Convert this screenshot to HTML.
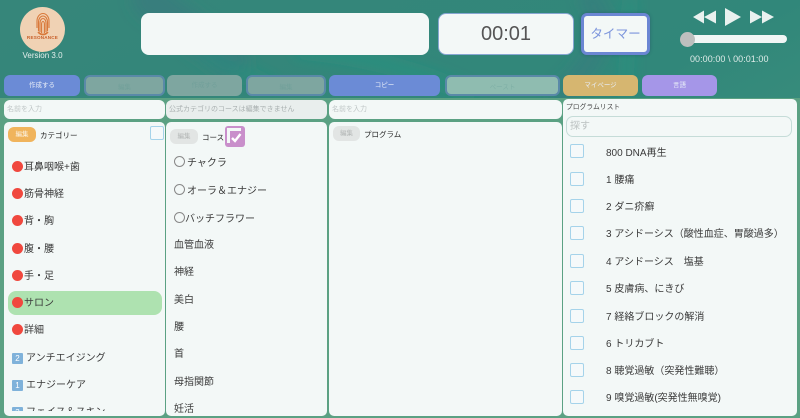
<!DOCTYPE html>
<html><head><meta charset="utf-8">
<style>
html,body{margin:0;padding:0}
body{width:800px;height:418px;overflow:hidden;position:relative;font-family:"Liberation Sans","Noto Sans CJK JP",sans-serif;background:#3a8a78}
#w{position:absolute;left:0;top:0;width:800px;height:418px;overflow:hidden;filter:blur(.35px)}
.a{position:absolute;box-sizing:border-box}
.p{background:#f3f8f7;border-radius:5px}
.btn{top:75px;height:21px;border-radius:6px;color:#e8eef8;font-size:6.5px;line-height:21px;text-align:center}
.off{background:#7ea6a0;border:2px solid #5a89a8;color:#72a09a}
.t{position:absolute;white-space:nowrap;color:#3a3a3a;font-size:10px;line-height:14px}
.chk{position:absolute;width:14px;height:14px;background:#f5f9fa;border:1px solid #a5d3ea;border-radius:2px;box-sizing:border-box}
.dot{display:inline-block;width:11px;height:11px;border-radius:50%;background:#f0483e;vertical-align:-2px;margin-right:1px}
.num{display:inline-block;width:11px;height:11px;background:#7fb2da;color:#fff;font-size:8px;line-height:11px;text-align:center;border-radius:1px;margin-right:3px;vertical-align:0}
.ph{color:#bfc6c6;font-size:7px;line-height:19px;padding-left:3px}
.circ{display:inline-block;width:9px;height:9px;border:1px solid #888;border-radius:50%;vertical-align:-1px;margin-right:2px}
</style></head><body>
<div id="w">
<svg class="a" style="left:0;top:0" width="800" height="418" viewBox="0 0 800 418">
<defs>
<linearGradient id="g" x1="0" y1="0" x2="1" y2="1"><stop offset="0" stop-color="#36867a"/><stop offset=".5" stop-color="#31877a"/><stop offset="1" stop-color="#4a9a80"/></linearGradient>
<filter id="b"><feGaussianBlur stdDeviation="7"/></filter>
</defs>
<rect width="800" height="418" fill="url(#g)"/>
<g filter="url(#b)" fill="none" stroke-linecap="round">
<path d="M150 0 L230 60" stroke="#3b7480" stroke-width="36" opacity=".45"/>
<path d="M205 55 L270 85" stroke="#1f937f" stroke-width="10" opacity=".6"/>
<path d="M300 50 Q400 60 470 95" stroke="#1c9a84" stroke-width="10" opacity=".6"/>
<path d="M590 0 Q620 40 560 95" stroke="#3d7285" stroke-width="20" opacity=".35"/>
<path d="M630 0 L625 95" stroke="#1c9a84" stroke-width="8" opacity=".6"/>
</g>
<rect x="0" y="98" width="800" height="320" fill="#5ba183"/>
</svg>

<div class="a" style="left:20px;top:7px;width:45px;height:45px;border-radius:50%;background:#f0d2b4"></div>
<svg class="a" style="left:33px;top:12px" width="20" height="24" viewBox="0 0 20 24" fill="none" stroke="#d9793a" stroke-width="1.1">
<path d="M4 16 V9 a6 7.5 0 0 1 12 0 V16"/><path d="M5.5 19 V10 a4.5 6 0 0 1 9 0 V19"/><path d="M7 20 V11 a3 4.5 0 0 1 6 0 V20"/><path d="M8.6 21 V12 a1.4 2.5 0 0 1 2.8 0 V21"/><path d="M5 20 Q10 25 15 20" stroke-width="1.6"/></svg>
<div class="t" style="left:20px;top:35px;width:45px;text-align:center;font-size:4.6px;line-height:6px;color:#c8602a;letter-spacing:.2px;font-weight:bold">RESONANCE</div>
<div class="t" style="left:0;top:49px;width:85px;text-align:center;color:#e4efec;font-size:8px">Version 3.0</div>

<div class="a" style="left:141px;top:13px;width:288px;height:42px;background:#f3f8f7;border-radius:8px"></div>
<div class="a" style="left:438px;top:13px;width:136px;height:42px;background:#f3f8f7;border-radius:8px;border:1px solid #87a6d2;color:#555;font-size:20px;line-height:41px;text-align:center">00:01</div>
<div class="a" style="left:581px;top:13px;width:69px;height:42px;background:#f3f8f7;border-radius:6px;border:3px solid #6b86d3;color:#7c95dc;font-size:12.6px;line-height:36px;text-align:center;box-shadow:0 0 3px rgba(30,50,90,.35)">タイマー</div>

<svg class="a" style="left:690px;top:7px" width="90" height="20" viewBox="0 0 90 20" fill="#e9f1ef">
<path d="M3 10 L14 3.5 V16.5Z M14 10 L26 3.5 V16.5 Z"/>
<path d="M35 1 L51 10 L35 19Z"/>
<path d="M60 3.5 L72 10 L60 16.5Z M72 3.5 L84 10 L72 16.5Z"/></svg>
<div class="a" style="left:681px;top:35px;width:106px;height:8px;background:#f1f6f5;border-radius:4px"></div>
<div class="a" style="left:680px;top:32px;width:15px;height:15px;background:#bdbfbe;border-radius:50%"></div>
<div class="t" style="left:690px;top:52px;color:#dfece9;font-size:9px;letter-spacing:.05px">00:00:00 \ 00:01:00</div>

<div class="a btn" style="left:4px;width:76px;background:#6b8bd6">作成する</div>
<div class="a btn off" style="left:84px;width:81px">編集</div>
<div class="a btn" style="left:167px;width:75px;background:#7ea6a0;color:#72a09a">作成する</div>
<div class="a btn off" style="left:246px;width:80px">編集</div>
<div class="a btn" style="left:329px;width:111px;background:#6b8bd6">コピー</div>
<div class="a btn off" style="left:445px;width:115px;background:#8fbcb0;color:#7fb0a6">ペースト</div>
<div class="a btn" style="left:563px;width:75px;background:#d6b670">マイページ</div>
<div class="a btn" style="left:642px;width:75px;background:#a596e8">言語</div>

<div class="a p ph" style="left:4px;top:100px;width:161px;height:19px;border-radius:6px">名前を入力</div>
<div class="a p ph" style="left:166px;top:100px;width:161px;height:19px;border-radius:6px;background:#e9eeed;color:#a9b0b0">公式カテゴリのコースは編集できません</div>
<div class="a p ph" style="left:329px;top:100px;width:233px;height:19px;border-radius:6px">名前を入力</div>

<div class="a p" style="left:4px;top:122px;width:161px;height:294px"></div>
<div class="a p" style="left:166px;top:122px;width:161px;height:294px"></div>
<div class="a p" style="left:329px;top:122px;width:233px;height:294px"></div>
<div class="a p" style="left:563px;top:99px;width:234px;height:317px"></div>

<div class="a" style="left:8px;top:127px;width:28px;height:15px;background:#f0b45c;border-radius:6px;color:#fbf3e4;font-size:6.5px;line-height:15px;text-align:center">編集</div>
<div class="t" style="left:40px;top:130px;font-size:7.5px;line-height:11px;color:#222">カテゴリー</div>
<div class="chk" style="left:150px;top:126px"></div>
<div class="a" style="left:170px;top:129px;width:28px;height:15px;background:#e2e5e4;border-radius:6px;color:#b3b7b6;font-size:6.5px;line-height:15px;text-align:center">編集</div>
<div class="t" style="left:202px;top:132px;font-size:7.5px;line-height:11px;color:#222">コース</div>
<svg class="a" style="left:225px;top:126px" width="20" height="21" viewBox="0 0 20 21">
<rect x="0" y="0" width="20" height="21" rx="3" fill="#c98fcb"/><rect x="2" y="2" width="14" height="15" fill="#f3f8f7"/><rect x="5" y="5" width="13" height="14" fill="#c98fcb"/><path d="M7 12 L10 15 L15.5 8" stroke="#fff" stroke-width="2.4" fill="none"/></svg>
<div class="a" style="left:333px;top:126px;width:27px;height:15px;background:#e2e5e4;border-radius:6px;color:#b3b7b6;font-size:6.5px;line-height:15px;text-align:center">編集</div>
<div class="t" style="left:364px;top:129px;font-size:7.5px;line-height:11px;color:#222">プログラム</div>

<div class="a" style="left:8px;top:291px;width:154px;height:24px;background:#aee2b0;border-radius:8px"></div>
<div class="a" style="left:4px;top:122px;width:161px;height:289px;overflow:hidden">
<div class="t" style="left:8px;top:39px"><span class="dot"></span>耳鼻咽喉+歯</div>
<div class="t" style="left:8px;top:66px"><span class="dot"></span>筋骨神経</div>
<div class="t" style="left:8px;top:93px"><span class="dot"></span>背・胸</div>
<div class="t" style="left:8px;top:121px"><span class="dot"></span>腹・腰</div>
<div class="t" style="left:8px;top:148px"><span class="dot"></span>手・足</div>
<div class="t" style="left:8px;top:175px"><span class="dot"></span>サロン</div>
<div class="t" style="left:8px;top:202px"><span class="dot"></span>詳細</div>
<div class="t" style="left:8px;top:230px"><span class="num">2</span>アンチエイジング</div>
<div class="t" style="left:8px;top:257px"><span class="num">1</span>エナジーケア</div>
<div class="t" style="left:8px;top:284px"><span class="num">3</span>フェイス＆スキン</div>
</div>

<div class="t" style="left:174px;top:156px"><span class="circ"></span>チャクラ</div>
<div class="t" style="left:174px;top:184px"><span class="circ"></span>オーラ＆エナジー</div>
<div class="t" style="left:174px;top:212px"><span class="circ" style="margin-right:0"></span>バッチフラワー</div>
<div class="t" style="left:174px;top:239px">血管血液</div>
<div class="t" style="left:174px;top:266px">神経</div>
<div class="t" style="left:174px;top:294px">美白</div>
<div class="t" style="left:174px;top:321px">腰</div>
<div class="t" style="left:174px;top:348px">首</div>
<div class="t" style="left:174px;top:376px">母指関節</div>
<div class="t" style="left:174px;top:403px">妊活</div>

<div class="t" style="left:566px;top:103px;font-size:6.8px;line-height:10px;color:#444">プログラムリスト</div>
<div class="a" style="left:566px;top:116px;width:226px;height:21px;border:1px solid #c5dcd8;border-radius:7px;background:#f3f8f7;color:#bcc2c2;font-size:10px;line-height:19px;padding-left:3px">探す</div>

<div class="chk" style="left:570px;top:144px"></div><div class="t" style="left:606px;top:147px">800 DNA再生</div>
<div class="chk" style="left:570px;top:172px"></div><div class="t" style="left:606px;top:174px">1 腰痛</div>
<div class="chk" style="left:570px;top:199px"></div><div class="t" style="left:606px;top:201px">2 ダニ疥癬</div>
<div class="chk" style="left:570px;top:226px"></div><div class="t" style="left:606px;top:228px">3 アシドーシス（酸性血症、胃酸過多）</div>
<div class="chk" style="left:570px;top:254px"></div><div class="t" style="left:606px;top:256px">4 アシドーシス　塩基</div>
<div class="chk" style="left:570px;top:281px"></div><div class="t" style="left:606px;top:283px">5 皮膚病、にきび</div>
<div class="chk" style="left:570px;top:309px"></div><div class="t" style="left:606px;top:311px">7 経絡ブロックの解消</div>
<div class="chk" style="left:570px;top:336px"></div><div class="t" style="left:606px;top:338px">6 トリカブト</div>
<div class="chk" style="left:570px;top:363px"></div><div class="t" style="left:606px;top:365px">8 聴覚過敏（突発性難聴）</div>
<div class="chk" style="left:570px;top:390px"></div><div class="t" style="left:606px;top:392px">9 嗅覚過敏(突発性無嗅覚)</div>
</div>
</body></html>
